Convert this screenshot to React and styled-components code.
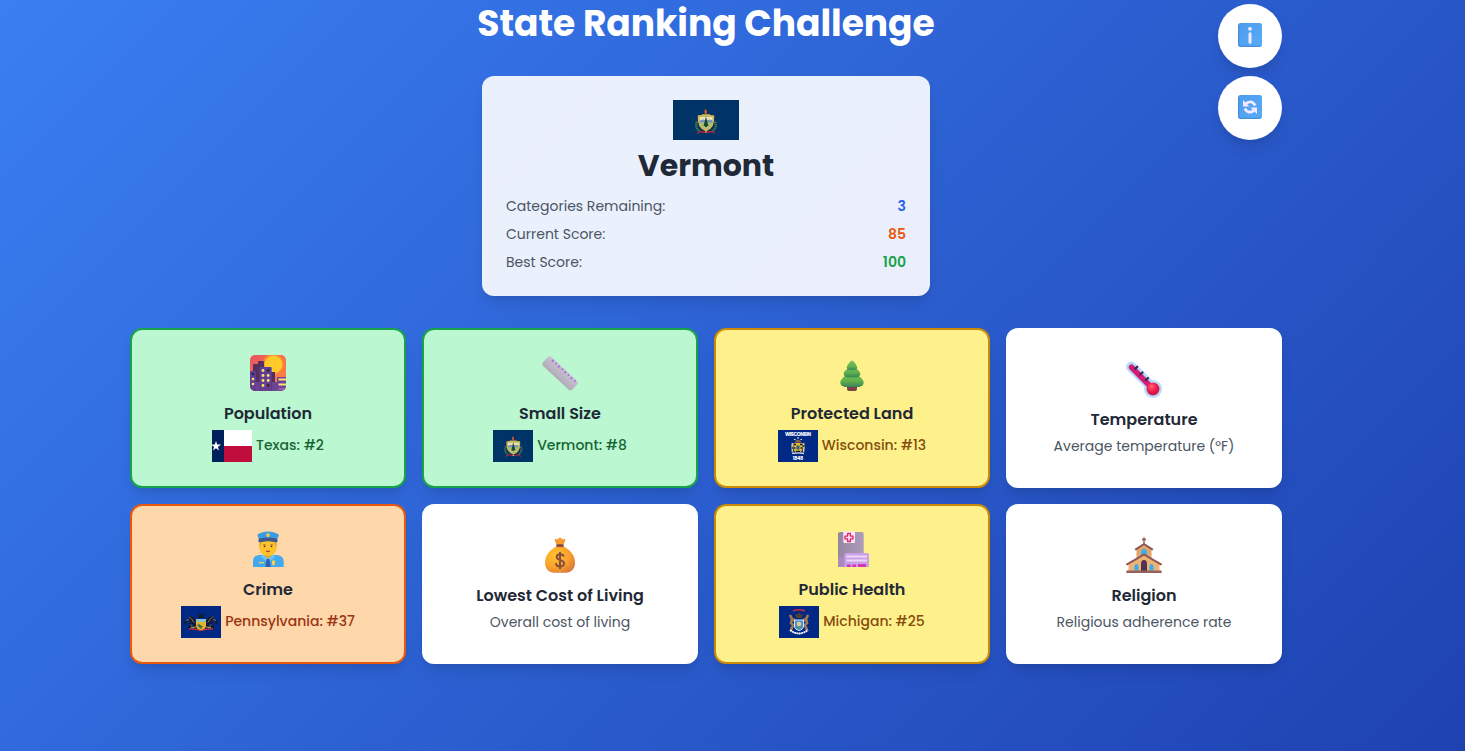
import React from "react";
import styled, { createGlobalStyle } from "styled-components";

const GlobalStyle = createGlobalStyle`
  *, *::before, *::after { box-sizing: border-box; }
  body {
    margin: 0;
    overflow: hidden;
    font-family: Poppins, Inter, "Open Sans", sans-serif;
    color: #1f2937;
  }
  svg { display: block; }
`;

const shadow = "0 10px 15px -3px rgba(0,0,0,.1), 0 4px 6px -4px rgba(0,0,0,.1)";

const Page = styled.div`
  min-height: 100vh;
  padding: 4px 53px 0 0;
  background: linear-gradient(135deg, #3b82f6 -5%, #1e40af 103%);
`;
const Container = styled.main`
  width: 1152px;
  margin: 0 auto;
`;
const Header = styled.header`
  display: grid;
  grid-template-columns: 1fr 460px 1fr;
  margin-bottom: 32px;
`;
const Center = styled.div`
  grid-column: 2;
  display: flex;
  flex-direction: column;
  align-items: center;
`;
const Title = styled.h1`
  margin: 0 0 32px;
  font-size: 36px;
  line-height: 40px;
  font-weight: 700;
  color: #fff;
  white-space: nowrap;
`;
const StateCard = styled.section`
  width: 448px;
  height: 220px;
  padding: 24px;
  border-radius: 12px;
  background: rgba(255, 255, 255, 0.9);
  box-shadow: ${shadow};
  display: flex;
  flex-direction: column;
  align-items: center;
`;
const StateName = styled.h2`
  margin: 8px 0 12px;
  font-size: 30px;
  line-height: 36px;
  font-weight: 700;
`;
const StatRow = styled.div`
  width: 100%;
  display: flex;
  justify-content: space-between;
  font-size: 14px;
  line-height: 20px;
  color: #4b5563;
  & + & { margin-top: 8px; }
`;
const StatValue = styled.span`
  font-weight: 600;
  color: ${(p) => p.$color};
`;
const Actions = styled.div`
  grid-column: 3;
  display: flex;
  flex-direction: column;
  align-items: flex-end;
  gap: 8px;
`;
const RoundButton = styled.button`
  width: 64px;
  height: 64px;
  padding: 0 0 2px;
  border: 0;
  border-radius: 50%;
  background: #fff;
  box-shadow: ${shadow};
  display: flex;
  align-items: center;
  justify-content: center;
`;
const Grid = styled.section`
  display: grid;
  grid-template-columns: repeat(4, 1fr);
  gap: 16px;
`;
const tones = {
  green: ["#bbf7d0", "#16a34a", "#166534"],
  yellow: ["#fef08a", "#ca8a04", "#854d0e"],
  orange: ["#fed7aa", "#ea580c", "#9a3412"],
  open: ["#ffffff", "#ffffff", "#4b5563"],
};
const Card = styled.article`
  height: 160px;
  padding-top: ${(p) => (p.$tone === "open" ? 32 : 25)}px;
  border: 2px solid ${(p) => tones[p.$tone][1]};
  border-radius: 12px;
  background: ${(p) => tones[p.$tone][0]};
  box-shadow: ${shadow};
  display: flex;
  flex-direction: column;
  align-items: center;
`;
const CardTitle = styled.h3`
  margin: ${(p) => (p.$open ? "10px 0 4px" : "11px 0 4px")};
  font-size: 16px;
  line-height: 24px;
  font-weight: 600;
`;
const Description = styled.p`
  margin: 0;
  font-size: 14px;
  line-height: 20px;
  color: #4b5563;
`;
const Result = styled.div`
  display: flex;
  gap: 4px;
  font-size: 14px;
  line-height: 30px;
  font-weight: 500;
  color: ${(p) => tones[p.$tone][2]};
`;
const Icon = styled.svg.attrs({ viewBox: "0 0 36 36" })`
  width: 36px;
  height: 36px;
  flex: none;
  overflow: visible;
`;
const FlagSvg = styled.svg`
  flex: none;
`;

const City = () => (
  <Icon>
    <defs>
      <linearGradient id="sky" x2="1" y2="1"><stop stopColor="#ea5561" /><stop offset="1" stopColor="#ff8a3c" /></linearGradient>
      <linearGradient id="tower" x2="0" y2="1"><stop stopColor="#5a4098" /><stop offset="1" stopColor="#6a3d8c" /></linearGradient>
      <clipPath id="cityClip"><rect width="36" height="36" rx="5" /></clipPath>
    </defs>
    <g clipPath="url(#cityClip)">
      <rect width="36" height="36" fill="url(#sky)" />
      <circle cx="23.5" cy="9.5" r="11" fill="#ff8438" />
      <circle cx="23.5" cy="9.5" r="9" fill="#ffc928" />
      <path d="M3 10q0-1 1-1h4V7q0-1 1-1h4q1 0 1 1v29H3zM20 17h5v19h-5z" fill="#54305f" />
      <path d="M0 17q0-1 1-1h4q1 0 1 1v19H0zM9.5 13q0-1 1-1H20.700q1 0 1 1v23H9.500z" fill="url(#tower)" />
      <path d="M6 27h3.500v9H6zM22 27h5v9h-5z" fill="#6b4493" />
      <rect x="27" y="22" width="10" height="14" rx="1" fill="#70439a" />
      <path d="M28.500 24.500h8M28.500 29.500h8" stroke="#ffe36e" strokeWidth="2.200" />
      <path d="M28.500 34h8" stroke="#a568a8" strokeWidth="1.600" />
      <g fill="#ffe56d">
        <circle cx="13" cy="15.500" r="1.400" /><circle cx="13" cy="20.500" r="1.400" /><circle cx="18.200" cy="20.500" r="1.400" />
        <circle cx="18.200" cy="25.500" r="1.400" /><circle cx="13" cy="30.500" r="1.400" /><circle cx="13" cy="25.500" r="1.400" />
        <circle cx="3" cy="24" r="1.300" /><circle cx="3" cy="29" r="1.300" />
      </g>
      <g fill="#35243f"><circle cx="18.200" cy="15.500" r="1.400" /><circle cx="18.200" cy="30.500" r="1.400" /><circle cx="3" cy="19" r="1.300" /></g>
    </g>
  </Icon>
);
const Ruler = () => (
  <Icon>
    <defs><linearGradient id="ruler" x2="0" y2="1"><stop stopColor="#c9c0d4" /><stop offset="1" stopColor="#b1adb7" /></linearGradient></defs>
    <g transform="rotate(43 18 18.500)">
      <rect x="-2" y="12.300" width="40" height="12.200" rx="2.800" fill="url(#ruler)" />
      <path d="M4 12.800v2.600M8.300 12.800v2M12.500 12.800v2.600M16.800 12.800v2M21 12.800v2.600M25.300 12.800v2M29.500 12.800v2.600M34 12.800v2" stroke="#a16de0" strokeWidth="1.500" />
    </g>
  </Icon>
);
const Tree = () => (
  <Icon>
    <defs>
      <linearGradient id="leaf" x2="0" y2="1"><stop stopColor="#7ac160" /><stop offset=".65" stopColor="#61b14c" /><stop offset="1" stopColor="#378257" /></linearGradient>
    </defs>
    <path d="M13 29h10v5q0 2-2 2h-6q-2 0-2-2z" fill="#794347" />
    <path d="M18 15c3 4 11.700 8 11.700 12.500 0 3-3 4.500-6 4.500H12.300c-3 0-6-1.500-6-4.500C6.300 23 15 19 18 15z" fill="url(#leaf)" />
    <path d="M18 9c2 4 8.300 6 8.300 10 0 2-2 3.300-4.300 3.300h-8c-2.300 0-4.300-1.300-4.300-3.300C9.700 15 16 13 18 9z" fill="url(#leaf)" />
    <path d="M18 5.500c1.700 0 5.300 5.600 5.300 7.200 0 1.600-2 2.400-5.300 2.400s-5.300-.8-5.300-2.400c0-1.600 3.600-7.200 5.300-7.200z" fill="url(#leaf)" />
  </Icon>
);
const Thermometer = () => (
  <Icon>
    <defs><radialGradient id="bulb" cx=".4" cy=".3"><stop stopColor="#ff6a7e" /><stop offset=".5" stopColor="#f92f50" /><stop offset="1" stopColor="#da164f" /></radialGradient></defs>
    <path d="M5.200 4.800L26 25" stroke="#b7dcfb" strokeWidth="10.400" strokeLinecap="round" />
    <circle cx="27" cy="27" r="9" fill="#b7dcfb" />
    <path d="M5.500 5.200L26 26" stroke="#d51c74" strokeWidth="5.600" strokeLinecap="round" />
    <path d="M9 6.800l2.200-2M14.300 12.500l2.200-2M19.700 18.100l2.200-2" stroke="#402b50" strokeWidth="2.300" strokeLinecap="round" />
    <circle cx="27" cy="27" r="6.500" fill="url(#bulb)" />
  </Icon>
);
const Police = () => (
  <Icon>
    <path d="M3 36v-5q0-7 7-7h16q7.700 0 7.700 7v5z" fill="#42a9ef" />
    <path d="M14 19h8v6l-4 5-4-5z" fill="#eda12c" />
    <path d="M13 23l5 5 5-5 2 3-5 4h-4l-5-4z" fill="#6cc5f6" />
    <path d="M16.500 28h3l1 8h-5z" fill="#315fae" />
    <path d="M9.500 10h17v5q1.500 1 0 3-1.500 7-8.500 7t-8.500-7q-1.500-2 0-3z" fill="#ffc32d" />
    <path d="M9.500 10h2q-.5 3-1.300 5h-.7zM24.500 10h2v5h-1z" fill="#e49a24" />
    <path d="M13 13.300l3 .7M20 14l3-.7" stroke="#b36d2b" strokeWidth=".8" />
    <circle cx="14.500" cy="15.300" r=".9" fill="#493144" /><circle cx="21.500" cy="15.300" r=".9" fill="#493144" />
    <path d="M16.200 20q1.800 1 3.600 0" stroke="#b73e2e" fill="none" strokeWidth="1.300" />
    <path d="M7.300 4Q11 .5 18 .5T29 4l-1.800 4.500H9z" fill="#3b9ce4" />
    <path d="M9 7.500q9-2 18 0l.8 3q-2 1-3.800.5-6-1.500-12 0-2 .5-3.800-.5z" fill="#3f5a8e" />
    <path d="M16.500 2.500h3v2.700L18 6.300l-1.500-1.100zM22 29.500h3v4l-1.500 1-1.500-1zM9 31h5v1.200H9z" fill="#ffcd45" />
  </Icon>
);
const MoneyBag = () => (
  <Icon>
    <defs><radialGradient id="bag" cx=".35" cy=".35" r=".75"><stop stopColor="#ffc32e" /><stop offset=".6" stopColor="#f8a22c" /><stop offset="1" stopColor="#dd773d" /></radialGradient></defs>
    <path d="M12.800 2.500q-.5-2 1.500-1.500l1.300.3L17 0q1-1 2 0l1.400 1.300 1.300-.3q2-.5 1.500 1.500L21.500 7h-7z" fill="#f79c31" />
    <path d="M14 8.500h8c6 3.500 11 9 11 16 0 7-4 10.300-11 10.300h-8C7 34.800 3 31.500 3 24.500c0-7 5-12.500 11-16z" fill="url(#bag)" />
    <rect x="14.300" y="6.200" width="7.400" height="2.900" rx="1" fill="#844b43" />
    <path d="M18 14v17M21.700 18.700c-.5-3.500-7-3.300-7 .3 0 4.200 7.400 2.100 7.400 6.500 0 4.100-7.800 4.100-8.200-.4" fill="none" stroke="#884d3d" strokeWidth="2" />
  </Icon>
);
const Hospital = () => (
  <Icon>
    <defs><linearGradient id="ward"><stop stopColor="#9586a1" /><stop offset="1" stopColor="#ad9bbb" /></linearGradient></defs>
    <path d="M4 3q0-2 2-2h21.700q2 0 2 2v33H4z" fill="url(#ward)" />
    <path d="M5 26h6v10H4v-9z" fill="#a98abf" />
    <rect x="9.300" y=".3" width="11.700" height="11.700" rx=".7" fill="#f6e7fb" />
    <path d="M13.600 2.500h2.800v2.600H19v2.800h-2.600v2.600h-2.800V7.900H11V5.100h2.600z" fill="none" stroke="#e92161" strokeWidth="1.300" strokeLinejoin="round" />
    <path d="M10.500 23.500q0-1.500 1.500-1.500h21.500Q35 22 35 23.500V36H10.500z" fill="#c9a1e6" />
    <path d="M12.500 25.500H33M12.500 29.500H33" stroke="#f0d7fa" strokeWidth="2" />
    <path d="M13 36v-2.500h3.600V36zM18.300 36v-2.500h3.800V36zM24 36v-3h8v3z" fill="#d733b6" />
  </Icon>
);
const Church = () => (
  <Icon>
    <path d="M10.500 11L18 6l7.500 5v13h-15z" fill="#e3a46c" />
    <path d="M2.500 26L18 16.500 33.500 26v7h-31z" fill="#edb276" />
    <path d="M15 19v-4q0-4 3-4t3 4v2l-3-1z" fill="#3aacea" />
    <path d="M8.500 32.500v-4q0-2.500 2-2.500t2 2.500v4zM23.500 32.500v-4q0-2.500 2-2.500t2 2.500v4z" fill="#36aceb" />
    <path d="M15 33v-7q0-4 3-4t3 4v7z" fill="#503352" />
    <path d="M18-.7V5.500M16 1.500h4" stroke="#8b5a54" strokeWidth="1.400" />
    <path d="M9.800 11.300L18 6l8.200 5.300M1 26.300L18 16.500l17 9.800" fill="none" stroke="#8d5551" strokeWidth="2" strokeLinecap="round" strokeLinejoin="round" />
    <rect x=".3" y="32.400" width="35.400" height="2.500" rx=".4" fill="#98615b" />
  </Icon>
);
const InfoIcon = () => (
  <svg width="24" height="24" viewBox="0 0 24 24">
    <defs><linearGradient id="key" x2="1" y2="1"><stop stopColor="#4c9ceb" /><stop offset="1" stopColor="#58acf9" /></linearGradient></defs>
    <rect width="24" height="24" rx="2.500" fill="url(#key)" />
    <path d="M.7 2v19.500q0 1.800 1.500 1.800H22" stroke="#4588d6" fill="none" />
    <circle cx="12" cy="5.800" r="1.900" fill="#f3eaff" />
    <path d="M12 10.800v8.400" stroke="#f3eaff" strokeWidth="3" strokeLinecap="round" />
  </svg>
);
const RefreshIcon = () => (
  <svg width="24" height="24" viewBox="0 0 24 24">
    <rect width="24" height="24" rx="2.500" fill="url(#key)" />
    <path d="M.7 2v19.500q0 1.800 1.500 1.800H22" stroke="#4588d6" fill="none" />
    <path d="M8 8.500Q14 4.300 17.200 10.500M16 15.500Q10 19.700 6.800 13.500" fill="none" stroke="#f3eaff" strokeWidth="2.800" />
    <path d="M5 5v6.500h6.500zM19 19v-6.500h-6.500z" fill="#f3eaff" />
  </svg>
);

const VermontArms = () => (
  <g>
    <path d="M-9 0q-2.500 6 3 10M9 0q2.500 6-3 10" stroke="#47794f" strokeWidth="2.400" fill="none" strokeDasharray="1.500 .7" />
    <path d="M-7.500-5.500q3.500 0 4-1h7q.5 1 4 1Q8.500 6 0 9-8.500 6-7.500-5.500z" fill="#a9c27b" stroke="#e1b647" strokeWidth="1.400" />
    <path d="M-6.500-4.500h13v4h-13z" fill="#eee0b9" />
    <path d="M-6.500-1l3.500-1 3 1 4-1 2.500 1v2h-13z" fill="#7994b8" />
    <path d="M0-5L2.500 4.500H1v1h-2v-1h-1.500z" fill="#174c35" />
    <path d="M-1-7.500q-1.500-3 .5-5l1.500 2-.5 3z" fill="#d4552e" />
    <path d="M-9 12l3.500-2q5.500 1.500 11 0L9 12" fill="none" stroke="#b52538" strokeWidth="1.300" />
    <circle cy="10.500" r=".8" fill="#d7c9a0" />
  </g>
);
const Flag = ({ state, large }) => {
  if (large)
    return (
      <FlagSvg width="66" height="40" viewBox="0 0 66 40">
        <path fill="#003366" d="M0 0h66v40H0z" />
        <g transform="translate(33 21.500)"><VermontArms /></g>
      </FlagSvg>
    );
  return (
    <FlagSvg width="40" height="32" viewBox="0 0 40 32">
      {state === "Texas" && (
        <g>
          <path fill="#fff" d="M0 0h40v32H0z" /><path fill="#bf0d3e" d="M12 16h28v16H12z" /><path fill="#00205b" d="M0 0h12v32H0z" />
          <path fill="#fff" d="M4 11l1.200 3.600H9l-3.100 2.300L7.100 20.600 4 18.300.9 20.600l1.200-3.700L-1 14.600h3.800z" />
        </g>
      )}
      {state === "Vermont" && (
        <g><path fill="#003366" d="M0 0h40v32H0z" /><g transform="translate(20.300 16.500) scale(.83)"><VermontArms /></g></g>
      )}
      {state === "Wisconsin" && (
        <g>
          <path fill="#002986" d="M0 0h40v32H0z" />
          <text x="20" y="6" fill="#fff" fontSize="5" fontWeight="700" textAnchor="middle" textLength="26">WISCONSIN</text>
          <text x="20" y="30" fill="#fff" fontSize="5" fontWeight="700" textAnchor="middle" textLength="10.500">1848</text>
          <path d="M14.500 13q-1 4 0 9M25.500 13q1 4 0 9" stroke="#d8c6a3" strokeWidth="1.600" fill="none" />
          <path d="M15.500 13h9v5q0 4-4.500 5-4.500-1-4.500-5z" fill="#e5b92e" />
          <path d="M18.500 15.500h3v4h-3z" fill="#34598f" /><path d="M17 11l3-1.500 3 1.500v1.500h-6z" fill="#8b6042" />
          <path d="M19 8h2M16 9.500h1.500M22.500 9.500H24" stroke="#ece8df" /><path d="M14 23.300q6-1 12 0" stroke="#eee" fill="none" strokeWidth="1.200" />
          <path d="M16 14.500h2M22 14.500h2M16 18h1.500M22.500 18H24M18 21.500h4M13.500 18h1.500M25 16h1.500" stroke="#111f32" strokeWidth="1.400" />
        </g>
      )}
      {state === "Pennsylvania" && (
        <g>
          <path fill="#002986" d="M0 0h40v32H0z" />
          <g id="horse">
            <path d="M13 23l1-4-4-4-1-4 3 1 2 4M9 14l-4 1-1 3M9 17l1 3-3 2" fill="none" stroke="#17181f" strokeWidth="1.800" />
            <path d="M8 10.500l3 3 2 3M5 14.500l3-1M9.500 18.500l1.500 1.500M12 21v2" stroke="#a07f76" fill="none" strokeWidth=".9" />
          </g>
          <use href="#horse" transform="translate(40) scale(-1 1)" />
          <path d="M15 13h10v6q0 4-5 6-5-2-5-6z" fill="#e7b42e" /><path d="M16 13h8v3h-8z" fill="#79c7df" /><path d="M17 17.500l5 3-2 2.500-3.500-3z" fill="#3f7540" />
          <path d="M17 11l1.500-1-1-3 2.500 1.500 3-1-1 2.500 1 2h-6z" fill="#171d20" />
          <path d="M8 23q6-.5 12 1.500 6-2 12-1.500" fill="none" stroke="#cc3532" strokeWidth="1.300" /><path d="M10 21.500l5-.5M25 21l5 .5" stroke="#c9a032" />
        </g>
      )}
      {state === "Michigan" && (
        <g>
          <path fill="#002986" d="M0 0h40v32H0z" />
          <path d="M11 9l2 4-1 4 2 2-2 5M29 9l-2 4 1 4-2 2 2 5M14 15l2-2M26 15l-2-2" stroke="#a77951" strokeWidth="2.600" fill="none" />
          <path d="M15.500 14h9v6q0 3.500-4.500 4.500-4.500-1-4.500-4.500z" fill="#4593df" stroke="#d4e5ef" /><circle cx="20" cy="18" r="2.200" fill="#e8cf74" /><path d="M16.500 21h7L20 23.500z" fill="#51906a" />
          <path d="M16 8l3 .7 1-2.700 1.500 2.700L24 8l-1.500 4h-5z" fill="#59402b" /><path d="M14 5q6-2.500 12 0" stroke="#d02b39" fill="none" strokeWidth="1.400" />
          <path d="M11 24q9 7 18 0" fill="none" stroke="#fff" strokeWidth="1.800" strokeDasharray="2 .4" />
        </g>
      )}
    </FlagSvg>
  );
};

const stats = [
  { label: "Categories Remaining:", value: "3", color: "#2563eb" },
  { label: "Current Score:", value: "85", color: "#ea580c" },
  { label: "Best Score:", value: "100", color: "#16a34a" },
];
const categories = [
  { name: "Population", Art: City, tone: "green", state: "Texas", rank: 2 },
  { name: "Small Size", Art: Ruler, tone: "green", state: "Vermont", rank: 8 },
  { name: "Protected Land", Art: Tree, tone: "yellow", state: "Wisconsin", rank: 13 },
  { name: "Temperature", Art: Thermometer, tone: "open", text: "Average temperature (°F)" },
  { name: "Crime", Art: Police, tone: "orange", state: "Pennsylvania", rank: 37 },
  { name: "Lowest Cost of Living", Art: MoneyBag, tone: "open", text: "Overall cost of living" },
  { name: "Public Health", Art: Hospital, tone: "yellow", state: "Michigan", rank: 25 },
  { name: "Religion", Art: Church, tone: "open", text: "Religious adherence rate" },
];

export default function App() {
  return (
    <Page>
      <GlobalStyle />
      <Container>
        <Header>
          <Center>
            <Title>State Ranking Challenge</Title>
            <StateCard>
              <Flag state="Vermont" large />
              <StateName>Vermont</StateName>
              {stats.map((s) => (
                <StatRow key={s.label}>
                  <span>{s.label}</span>
                  <StatValue $color={s.color}>{s.value}</StatValue>
                </StatRow>
              ))}
            </StateCard>
          </Center>
          <Actions>
            <RoundButton aria-label="Info"><InfoIcon /></RoundButton>
            <RoundButton aria-label="Restart"><RefreshIcon /></RoundButton>
          </Actions>
        </Header>
        <Grid>
          {categories.map(({ name, Art, tone, state, rank, text }) => (
            <Card key={name} $tone={tone}>
              <Art />
              <CardTitle $open={tone === "open"}>{name}</CardTitle>
              {state ? (
                <Result $tone={tone}>
                  <Flag state={state} />
                  <span>{`${state}: #${rank}`}</span>
                </Result>
              ) : (
                <Description>{text}</Description>
              )}
            </Card>
          ))}
        </Grid>
      </Container>
    </Page>
  );
}
